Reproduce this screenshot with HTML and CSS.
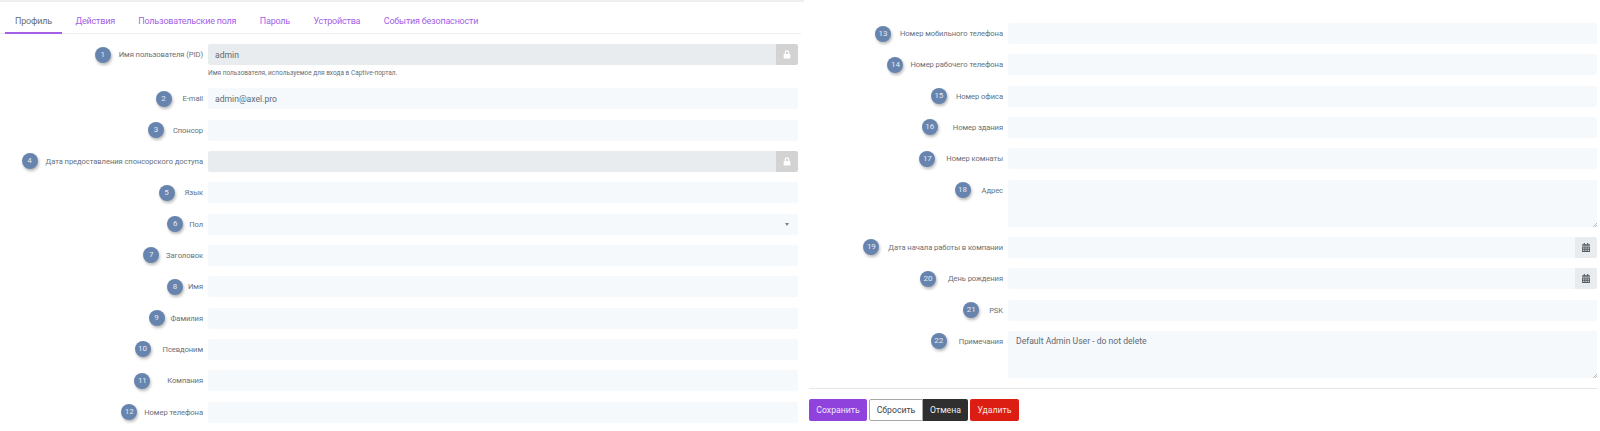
FILE: index.html
```html
<!DOCTYPE html>
<html lang="ru">
  <head>
    <meta charset="UTF-8" />
    <meta name="viewport" content="width=device-width, initial-scale=1.0" />
    <title>Профиль</title>
    <link rel="stylesheet" href="styles.css">
  </head>
  <body>
    <div class="page">
      <div class="panel panel-left">
        <ul class="tabs">
          <li class="tab active">Профиль</li>
          <li class="tab">Действия</li>
          <li class="tab">Пользовательские поля</li>
          <li class="tab">Пароль</li>
          <li class="tab">Устройства</li>
          <li class="tab">События безопасности</li>
        </ul>

        <form class="fields">
          <div class="row">
            <div class="label"><span class="badge gap-8">1</span><label>Имя пользователя (PID)</label></div>
            <div class="control">
              <div class="group">
                <input class="input locked" type="text" value="admin" disabled />
                <span class="addon addon-lock">
                  <svg viewBox="0 0 14 16" class="icon"><path d="M3 7V4.5a4 4 0 0 1 8 0V7h1a1 1 0 0 1 1 1v6a1 1 0 0 1-1 1H2a1 1 0 0 1-1-1V8a1 1 0 0 1 1-1h1zm2 0h4V4.5a2 2 0 0 0-4 0V7z" fill="#fff"/></svg>
                </span>
              </div>
              <p class="help">Имя пользователя, используемое для входа в Captive-портал.</p>
            </div>
          </div>
          <div class="row">
            <div class="label"><span class="badge gap-11">2</span><label>E-mail</label></div>
            <div class="control"><input class="input" type="text" value="admin@axel.pro" /></div>
          </div>
          <div class="row">
            <div class="label"><span class="badge gap-9">3</span><label>Спонсор</label></div>
            <div class="control"><input class="input" type="text" /></div>
          </div>
          <div class="row">
            <div class="label"><span class="badge gap-8">4</span><label>Дата предоставления спонсорского доступа</label></div>
            <div class="control">
              <div class="group">
                <input class="input locked" type="text" disabled />
                <span class="addon addon-lock">
                  <svg viewBox="0 0 14 16" class="icon"><path d="M3 7V4.5a4 4 0 0 1 8 0V7h1a1 1 0 0 1 1 1v6a1 1 0 0 1-1 1H2a1 1 0 0 1-1-1V8a1 1 0 0 1 1-1h1zm2 0h4V4.5a2 2 0 0 0-4 0V7z" fill="#fff"/></svg>
                </span>
              </div>
            </div>
          </div>
          <div class="row">
            <div class="label"><span class="badge gap-10">5</span><label>Язык</label></div>
            <div class="control"><input class="input" type="text" /></div>
          </div>
          <div class="row">
            <div class="label"><span class="badge gap-6">6</span><label>Пол</label></div>
            <div class="control">
              <div class="select-wrap">
                <select class="input select"><option></option></select>
                <span class="caret"></span>
              </div>
            </div>
          </div>
          <div class="row">
            <div class="label"><span class="badge gap-7">7</span><label>Заголовок</label></div>
            <div class="control"><input class="input" type="text" /></div>
          </div>
          <div class="row">
            <div class="label"><span class="badge gap-5">8</span><label>Имя</label></div>
            <div class="control"><input class="input" type="text" /></div>
          </div>
          <div class="row">
            <div class="label"><span class="badge gap-6">9</span><label>Фамилия</label></div>
            <div class="control"><input class="input" type="text" /></div>
          </div>
          <div class="row">
            <div class="label"><span class="badge gap-12">10</span><label>Псевдоним</label></div>
            <div class="control"><input class="input" type="text" /></div>
          </div>
          <div class="row">
            <div class="label"><span class="badge gap-17">11</span><label>Компания</label></div>
            <div class="control"><input class="input" type="text" /></div>
          </div>
          <div class="row">
            <div class="label"><span class="badge gap-7">12</span><label>Номер телефона</label></div>
            <div class="control"><input class="input" type="text" /></div>
          </div>
        </form>
      </div>

      <div class="panel panel-right">
        <form class="fields">
          <div class="row">
            <div class="label"><span class="badge gap-9">13</span><label>Номер мобильного телефона</label></div>
            <div class="control"><input class="input" type="text" /></div>
          </div>
          <div class="row">
            <div class="label"><span class="badge gap-7">14</span><label>Номер рабочего телефона</label></div>
            <div class="control"><input class="input" type="text" /></div>
          </div>
          <div class="row">
            <div class="label"><span class="badge gap-9">15</span><label>Номер офиса</label></div>
            <div class="control"><input class="input" type="text" /></div>
          </div>
          <div class="row">
            <div class="label"><span class="badge gap-15">16</span><label>Номер здания</label></div>
            <div class="control"><input class="input" type="text" /></div>
          </div>
          <div class="row">
            <div class="label"><span class="badge gap-11">17</span><label>Номер комнаты</label></div>
            <div class="control"><input class="input" type="text" /></div>
          </div>
          <div class="row row-top">
            <div class="label"><span class="badge gap-11">18</span><label>Адрес</label></div>
            <div class="control"><textarea class="input area"></textarea></div>
          </div>
          <div class="row">
            <div class="label"><span class="badge gap-9">19</span><label>Дата начала работы в компании</label></div>
            <div class="control">
              <div class="group">
                <input class="input" type="text" />
                <span class="addon addon-date">
                  <svg viewBox="0 0 14 16" class="icon"><path d="M3 0h2v2h4V0h2v2h2a1 1 0 0 1 1 1v2H0V3a1 1 0 0 1 1-1h2zM0 6h14v9a1 1 0 0 1-1 1H1a1 1 0 0 1-1-1zm2 2v2h2V8zm4 0v2h2V8zm4 0v2h2V8zm-8 4v2h2v-2zm4 0v2h2v-2zm4 0v2h2v-2z" fill="#555c63" fill-rule="evenodd"/></svg>
                </span>
              </div>
            </div>
          </div>
          <div class="row">
            <div class="label"><span class="badge gap-12">20</span><label>День рождения</label></div>
            <div class="control">
              <div class="group">
                <input class="input" type="text" />
                <span class="addon addon-date">
                  <svg viewBox="0 0 14 16" class="icon"><path d="M3 0h2v2h4V0h2v2h2a1 1 0 0 1 1 1v2H0V3a1 1 0 0 1 1-1h2zM0 6h14v9a1 1 0 0 1-1 1H1a1 1 0 0 1-1-1zm2 2v2h2V8zm4 0v2h2V8zm4 0v2h2V8zm-8 4v2h2v-2zm4 0v2h2v-2zm4 0v2h2v-2z" fill="#555c63" fill-rule="evenodd"/></svg>
                </span>
              </div>
            </div>
          </div>
          <div class="row">
            <div class="label"><span class="badge gap-10">21</span><label>PSK</label></div>
            <div class="control"><input class="input" type="text" /></div>
          </div>
          <div class="row row-top">
            <div class="label"><span class="badge gap-12">22</span><label>Примечания</label></div>
            <div class="control"><textarea class="input area">Default Admin User - do not delete</textarea></div>
          </div>
        </form>

        <div class="actions">
          <button type="button" class="btn btn-save">Сохранить</button>
          <div class="btn-pair">
            <button type="button" class="btn btn-reset">Сбросить</button>
            <button type="button" class="btn btn-cancel">Отмена</button>
          </div>
          <button type="button" class="btn btn-delete">Удалить</button>
        </div>
      </div>
    </div>
  </body>
</html>
```

FILE: styles.css
```css
html,
body {
  margin: 0;
  padding: 0;
  background: #fff;
}
body {
  font-family: Roboto, "Liberation Sans", sans-serif;
  color: #6c757d;
  overflow: hidden;
}
.page {
  display: flex;
  width: 1600px;
  height: 431px;
}
.panel-left {
  width: 804px;
  border-top: 2px solid #eee;
  box-sizing: border-box;
}
.panel-right {
  flex: 1;
  margin-left: 5px;
  padding-right: 3px;
  padding-top: 23px;
}

/* tabs */
.tabs {
  display: flex;
  list-style: none;
  margin: 0 3px 0 0;
  padding: 0 0 0 5px;
  height: 31px;
  border-bottom: 1px solid #eee;
}
.tab {
  padding: 12px 10px 0;
  margin-right: 3.4px;
  font-size: 9px;
  line-height: 14px;
  color: #a45fe8;
  letter-spacing: -0.2px;
}
.tab.active {
  color: #66707a;
  border-bottom: 2px solid #a461e6;
  height: 18px;
}

/* form rows */
.fields {
  display: flex;
  flex-direction: column;
  gap: 10.33px;
}
.panel-left .fields {
  padding-top: 10px;
}
.row {
  display: grid;
  grid-template-columns: 203px 590px;
  column-gap: 5px;
  min-height: 21px;
}
.panel-right .row {
  grid-template-columns: 194px 589px;
}
.label {
  display: flex;
  justify-content: flex-end;
  align-items: center;
  height: 21px;
  font-size: 7.6px;
  letter-spacing: -0.07px;
  color: #66707a;
  white-space: nowrap;
}
.badge {
  flex: none;
  width: 16px;
  height: 16px;
  border-radius: 50%;
  background: #6784ae;
  color: #e4e9f1;
  font-size: 8px;
  line-height: 16px;
  text-align: center;
  box-shadow: 1px 2px 3px rgba(0, 0, 0, 0.28);
}
.gap-5 { margin-right: 5px; }
.gap-6 { margin-right: 6px; }
.gap-7 { margin-right: 7px; }
.gap-8 { margin-right: 8px; }
.gap-9 { margin-right: 9px; }
.gap-10 { margin-right: 10px; }
.gap-11 { margin-right: 11px; }
.gap-12 { margin-right: 12px; }
.gap-15 { margin-right: 15px; }
.gap-17 { margin-right: 17px; }

/* inputs */
.input {
  display: block;
  width: 100%;
  height: 21px;
  margin: 0;
  padding: 0 7px;
  box-sizing: border-box;
  border: 0;
  border-radius: 2px;
  background: #f5f9fc;
  font-family: inherit;
  font-size: 8.6px;
  color: #606a73;
  outline: none;
}
.locked {
  background: #e9ecef;
}
.area {
  height: 47px;
  padding: 4px 8px;
  line-height: 12px;
  resize: vertical;
}
.area::-webkit-resizer {
  background: linear-gradient(135deg, transparent 84%, #bbb 84%, #bbb 88%, transparent 88%, transparent 92%, #bbb 92%, #bbb 96%, transparent 96%);
}
.select {
  appearance: none;
  -webkit-appearance: none;
}
.select-wrap {
  position: relative;
}
.caret {
  position: absolute;
  top: 9px;
  right: 9px;
  border-top: 3px solid #7b8186;
  border-left: 2.5px solid transparent;
  border-right: 2.5px solid transparent;
}
.group {
  display: flex;
}
.group .input {
  flex: 1;
  border-radius: 2px 0 0 2px;
}
.addon {
  flex: none;
  display: flex;
  align-items: center;
  justify-content: center;
  width: 22px;
  height: 21px;
  border-radius: 0 2px 2px 0;
}
.addon-lock {
  background: #d3d3d3;
}
.addon-date {
  background: #e9ecef;
}
.icon {
  width: 8px;
  height: 9px;
}
.help {
  margin: 4px 0 0;
  font-size: 6.5px;
  line-height: 9px;
  color: #66707a;
}

/* buttons */
.actions {
  display: flex;
  gap: 2px;
  margin-top: 10px;
  padding-top: 10px;
  border-top: 1px solid #e6e6e6;
}
.btn-pair {
  display: flex;
}
.btn {
  height: 22px;
  margin: 0;
  padding: 0;
  box-sizing: border-box;
  border: 1px solid transparent;
  border-radius: 2px;
  font-family: inherit;
  font-size: 8.7px;
}
.btn-save {
  width: 58px;
  background: #8f42dc;
  color: #f1e6fb;
}
.btn-reset {
  width: 54px;
  background: #fff;
  border-color: #a8a8a8;
  color: #444;
  border-radius: 2px 0 0 2px;
}
.btn-cancel {
  width: 45px;
  background: #2f2f2f;
  color: #eee;
  border-radius: 0 2px 2px 0;
}
.btn-delete {
  width: 49px;
  background: #dc1d12;
  color: #fbe3e1;
}
```
